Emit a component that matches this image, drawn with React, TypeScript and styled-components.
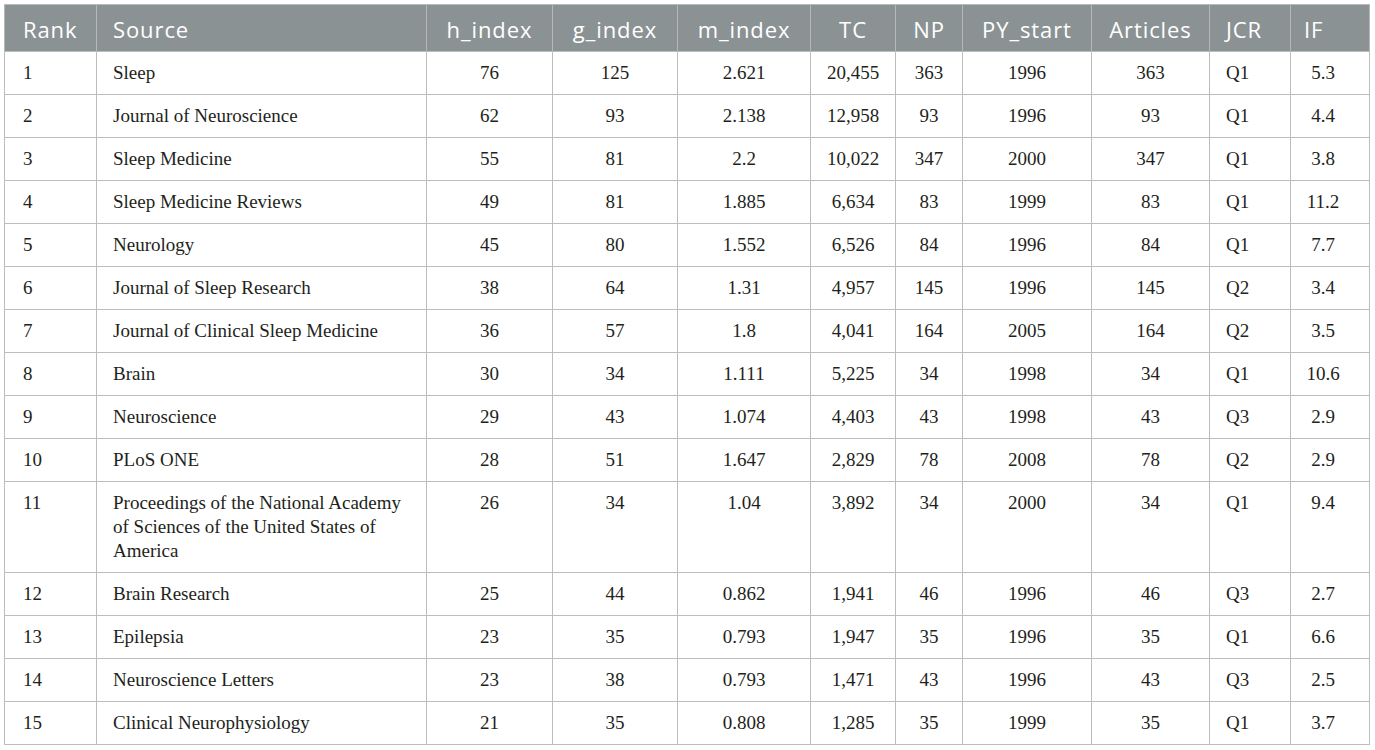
import React from "react";
import styled, { createGlobalStyle } from "styled-components";

const Global = createGlobalStyle`
  html, body { margin: 0; padding: 0; background: #ffffff; }
  body { font-family: "Liberation Serif", "Times New Roman", serif; }
`;

const Page = styled.div`
  padding: 4px 5px 4px 4px;
`;

const Table = styled.table`
  width: 1366px;
  table-layout: fixed;
  border-collapse: collapse;
  border: 1px solid #b9bcbd;
`;

type Align = "left" | "center";

const Th = styled.th<{ $align: Align; $pl: number; $pr: number }>`
  background: #8b9294;
  color: #ffffff;
  font-family: "Open Sans", Lato, sans-serif;
  font-weight: 400;
  font-size: 22px;
  line-height: 28px;
  padding: 10px ${(p) => p.$pr}px 8px ${(p) => p.$pl}px;
  height: 28px;
  text-align: ${(p) => p.$align};
  border-left: 1px solid #b4b8ba;
  border-right: 1px solid #b4b8ba;
  border-top: 1px solid #b9bcbd;
  white-space: nowrap;
  letter-spacing: 0.9px;
`;

const Td = styled.td<{ $align: Align; $pl: number; $pr: number }>`
  color: #231f20;
  font-family: "Liberation Serif", "Times New Roman", serif;
  font-size: 19px;
  line-height: 24px;
  padding: 9px ${(p) => p.$pr}px 9px ${(p) => p.$pl}px;
  vertical-align: top;
  text-align: ${(p) => p.$align};
  border: 1px solid #bdbdbd;
`;

type Col = { key: string; width: number; align: Align; hAlign: Align; pl: number; pr: number; hpl?: number };

const cols: Col[] = [
  { key: "Rank", width: 92, align: "left", hAlign: "left", pl: 18, pr: 4 },
  { key: "Source", width: 330, align: "left", hAlign: "left", pl: 16, pr: 18 },
  { key: "h_index", width: 126, align: "center", hAlign: "center", pl: 4, pr: 4 },
  { key: "g_index", width: 125, align: "center", hAlign: "center", pl: 4, pr: 4 },
  { key: "m_index", width: 133, align: "center", hAlign: "center", pl: 4, pr: 4 },
  { key: "TC", width: 85, align: "center", hAlign: "center", pl: 4, pr: 4 },
  { key: "NP", width: 67, align: "center", hAlign: "center", pl: 4, pr: 4 },
  { key: "PY_start", width: 129, align: "center", hAlign: "center", pl: 4, pr: 4 },
  { key: "Articles", width: 118, align: "center", hAlign: "center", pl: 4, pr: 4 },
  { key: "JCR", width: 81, align: "left", hAlign: "left", pl: 16, pr: 2 },
  { key: "IF", width: 79, align: "center", hAlign: "left", pl: 10, pr: 24, hpl: 13 },
];

const rows: string[][] = [
  ["1", "Sleep", "76", "125", "2.621", "20,455", "363", "1996", "363", "Q1", "5.3"],
  ["2", "Journal of Neuroscience", "62", "93", "2.138", "12,958", "93", "1996", "93", "Q1", "4.4"],
  ["3", "Sleep Medicine", "55", "81", "2.2", "10,022", "347", "2000", "347", "Q1", "3.8"],
  ["4", "Sleep Medicine Reviews", "49", "81", "1.885", "6,634", "83", "1999", "83", "Q1", "11.2"],
  ["5", "Neurology", "45", "80", "1.552", "6,526", "84", "1996", "84", "Q1", "7.7"],
  ["6", "Journal of Sleep Research", "38", "64", "1.31", "4,957", "145", "1996", "145", "Q2", "3.4"],
  ["7", "Journal of Clinical Sleep Medicine", "36", "57", "1.8", "4,041", "164", "2005", "164", "Q2", "3.5"],
  ["8", "Brain", "30", "34", "1.111", "5,225", "34", "1998", "34", "Q1", "10.6"],
  ["9", "Neuroscience", "29", "43", "1.074", "4,403", "43", "1998", "43", "Q3", "2.9"],
  ["10", "PLoS ONE", "28", "51", "1.647", "2,829", "78", "2008", "78", "Q2", "2.9"],
  ["11", "Proceedings of the National Academy of Sciences of the United States of America", "26", "34", "1.04", "3,892", "34", "2000", "34", "Q1", "9.4"],
  ["12", "Brain Research", "25", "44", "0.862", "1,941", "46", "1996", "46", "Q3", "2.7"],
  ["13", "Epilepsia", "23", "35", "0.793", "1,947", "35", "1996", "35", "Q1", "6.6"],
  ["14", "Neuroscience Letters", "23", "38", "0.793", "1,471", "43", "1996", "43", "Q3", "2.5"],
  ["15", "Clinical Neurophysiology", "21", "35", "0.808", "1,285", "35", "1999", "35", "Q1", "3.7"],
];

export default function App() {
  return (
    <Page>
      <Global />
      <Table>
        <colgroup>
          {cols.map((c) => (
            <col key={c.key} style={{ width: c.width }} />
          ))}
        </colgroup>
        <thead>
          <tr>
            {cols.map((c) => (
              <Th key={c.key} $align={c.hAlign} $pl={c.hpl ?? c.pl} $pr={c.pr}>
                {c.key}
              </Th>
            ))}
          </tr>
        </thead>
        <tbody>
          {rows.map((r) => (
            <tr key={r[0]}>
              {r.map((v, i) => (
                <Td key={i} $align={cols[i].align} $pl={cols[i].pl} $pr={cols[i].pr}>
                  {v}
                </Td>
              ))}
            </tr>
          ))}
        </tbody>
      </Table>
    </Page>
  );
}
